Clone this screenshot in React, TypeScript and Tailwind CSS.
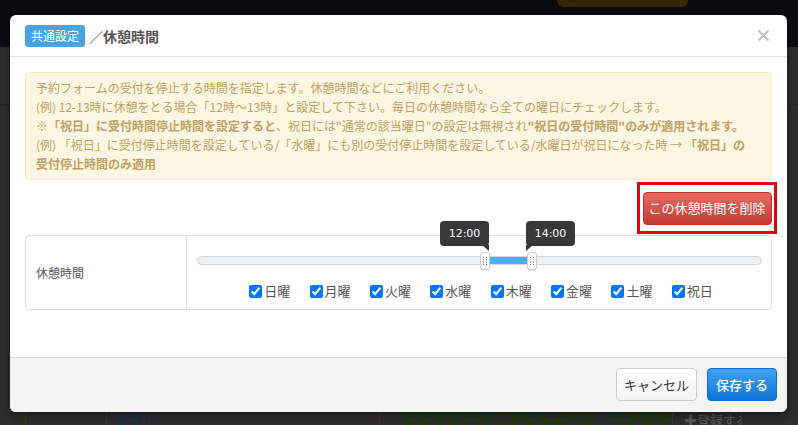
import React from "react";

function Grip() {
  return (
    <svg width="4" height="8" viewBox="0 0 4 8">
      <rect x="0" y="0" width="1" height="1" fill="#666" />
      <rect x="3" y="0" width="1" height="1" fill="#666" />
      <rect x="0" y="2.3" width="1" height="1" fill="#666" />
      <rect x="3" y="2.3" width="1" height="1" fill="#666" />
      <rect x="0" y="4.6" width="1" height="1" fill="#666" />
      <rect x="3" y="4.6" width="1" height="1" fill="#666" />
      <rect x="0" y="6.9" width="1" height="1" fill="#666" />
      <rect x="3" y="6.9" width="1" height="1" fill="#666" />
    </svg>
  );
}

export default function App() {
  const days = ["日曜", "月曜", "火曜", "水曜", "木曜", "金曜", "土曜", "祝日"];
  return (
    <div className="relative w-[798px] h-[425px] overflow-hidden bg-[#2d2d2d] font-['Noto_Sans_CJK_JP','Noto_Sans',sans-serif]">
      {/* background page under overlay */}
      <div className="flex flex-col h-full">
        <div className="h-[47px] shrink-0 bg-[#0a0c0f] flex">
          <div className="ml-[557px] w-[131px] h-[7px] rounded-b-[8px] bg-[#382607]" />
        </div>
        <div className="h-[58px] shrink-0 border-b border-[#272727]" />
        <div className="flex-1" />
        <div className="h-[14px] shrink-0 flex text-[13px] leading-[18px] overflow-hidden">
          <div className="w-[25px]" />
          <div className="w-[81px] border-l border-[#4a3512]" />
          <div className="w-[273px] border-l border-[#3a3a3a] pl-[8px] text-[#1d3050]">詳細1)</div>
          <div className="w-[293px] border-l border-[#4a3512] pl-[22px] font-bold text-[15px] text-[#213a0d] whitespace-nowrap overflow-hidden">
            臨時営業日時（通常休みだが、予約受付す
          </div>
          <div className="w-[69px] border-l border-[#3a3a3a] pl-[11px] text-[#5a5a5a] whitespace-nowrap overflow-hidden">✚登録する</div>
          <div className="flex-1 border-l border-[#3a3a3a]" />
        </div>
      </div>

      {/* modal */}
      <div className="absolute left-[10px] top-[15px] w-[777px] h-[397px] bg-white rounded-[6px] shadow-[0_3px_9px_rgba(0,0,0,0.5)] flex flex-col">
        <div className="h-[42px] shrink-0 border-b border-[#e5e5e5] flex items-center pl-[15px] pr-[17px]">
          <span className="h-[22px] px-[6px] rounded-[3px] bg-[#4aa3e6] text-white text-[12px] leading-[22px]">共通設定</span>
          <span className="ml-[4px] text-[14px] text-[#555] font-bold leading-[22px]">
            <span className="font-normal">／</span>休憩時間
          </span>
          <svg className="ml-auto" width="13" height="13" viewBox="0 0 13 13">
            <path d="M1.5 1.5L11.5 11.5M11.5 1.5L1.5 11.5" stroke="#c2c2c2" strokeWidth="2.2" fill="none" />
          </svg>
        </div>

        <div className="h-[300px] shrink-0 px-[15px] pt-[15px]">
          <div className="rounded-[4px] border border-[#f8ebc8] bg-[#fcf6e3] px-[10px] pt-[5px] pb-[6px] text-[12px] leading-[19px] text-[#c29f63]">
            <p>予約フォームの受付を停止する時間を指定します。休憩時間などにご利用ください。</p>
            <p>(例) 12-13時に休憩をとる場合「12時～13時」と設定して下さい。毎日の休憩時間なら全ての曜日にチェックします。</p>
            <p>
              ※<b>「祝日」に受付時間停止時間を設定すると</b>、祝日には"通常の該当曜日"の設定は無視され<b>"祝日の受付時間"のみが適用されます。</b>
            </p>
            <p>
              (例) 「祝日」に受付停止時間を設定している/「水曜」にも別の受付停止時間を設定している/水曜日が祝日になった時 → <b>「祝日」の<br />受付停止時間のみ適用</b>
            </p>
          </div>

          <div className="flex justify-end mt-[2px] -mr-[5px]">
            <div className="border-[3px] border-[#e8000b] px-[2.5px] py-[6.5px]">
              <button className="h-[33px] w-[129px] rounded-[4px] border border-[#b9302b] bg-linear-to-b from-[#ea6a64] to-[#c23b35] text-white text-[13px] flex items-center justify-center">
                この休憩時間を削除
              </button>
            </div>
          </div>

          <div className="mt-[1px] h-[75px] flex rounded-[4px] border border-[#dddddd]">
            <div className="w-[161px] shrink-0 border-r border-[#dddddd] flex items-center pl-[10px] text-[12px] text-[#555]">
              休憩時間
            </div>
            <div className="flex-1 pl-[10px] pr-[9px] pt-[20px]">
              <div className="relative h-[9px] rounded-full border border-[#cfd8e2] bg-[#eef1f4]">
                <div className="absolute top-[0px] left-[290px] w-[39px] h-[7px] bg-[#4aaef0]" />
                <div className="absolute top-[-5px] left-[282px] w-[10px] h-[18px] rounded-[3px] border border-[#c9d1da] bg-white flex items-center justify-center shadow-[0_1px_1px_rgba(0,0,0,0.1)]">
                  <Grip />
                </div>
                <div className="absolute top-[-5px] left-[329px] w-[10px] h-[18px] rounded-[3px] border border-[#c9d1da] bg-white flex items-center justify-center shadow-[0_1px_1px_rgba(0,0,0,0.1)]">
                  <Grip />
                </div>
                <div className="absolute top-[-36px] left-[242px] w-[49px] h-[25px] rounded-[4px] bg-[#383838] text-white text-[11px] leading-[25px] text-center font-['DejaVu_Sans',sans-serif]">
                  12:00
                  <span className="absolute right-0 top-[24px] w-0 h-0 border-t-[6px] border-t-[#383838] border-l-[7px] border-l-transparent" />
                </div>
                <div className="absolute top-[-36px] left-[328px] w-[49px] h-[25px] rounded-[4px] bg-[#383838] text-white text-[11px] leading-[25px] text-center font-['DejaVu_Sans',sans-serif]">
                  14:00
                  <span className="absolute left-0 top-[24px] w-0 h-0 border-t-[6px] border-t-[#383838] border-r-[7px] border-r-transparent" />
                </div>
              </div>
              <div className="mt-[18px] pl-[3px] flex justify-center gap-[19.4px]">
                {days.map((d) => (
                  <label key={d} className="w-[41px] flex items-center gap-[2px] text-[13px] leading-[16px] text-[#555] whitespace-nowrap">
                    <input type="checkbox" defaultChecked className="w-[13px] h-[13px] m-0 shrink-0" />
                    <span>{d}</span>
                  </label>
                ))}
              </div>
            </div>
          </div>
        </div>

        <div className="h-[55px] shrink-0 border-t border-[#dddddd] bg-[#f4f4f4] rounded-b-[6px] flex justify-end items-start pt-[10px] pr-[10px] gap-[10px]">
          <button className="h-[33px] w-[81px] rounded-[4px] border border-[#cccccc] bg-linear-to-b from-white to-[#f2f2f2] text-[13px] text-[#333] flex items-center justify-center">
            キャンセル
          </button>
          <button className="h-[33px] w-[70px] rounded-[4px] border border-[#0d6fd1] bg-linear-to-b from-[#42a2f2] to-[#0b74da] text-[13px] text-white font-medium flex items-center justify-center">
            保存する
          </button>
        </div>
      </div>
    </div>
  );
}
